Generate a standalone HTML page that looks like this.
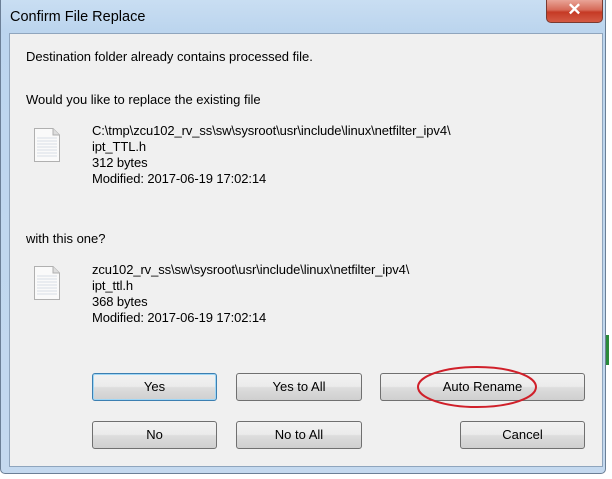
<!DOCTYPE html>
<html><head><style>
body{margin:0;width:612px;height:479px;overflow:hidden;background:#fff;font-family:"Liberation Sans",sans-serif;position:relative}
.frame{position:absolute;left:0;top:0;width:606px;height:474px;background:linear-gradient(180deg,#c9def2 0,#bcd5ee 30px,#c4d9ef 100%);border:1px solid #6b7f96;border-top:none;box-sizing:border-box;border-radius:0 0 5px 5px}
.title{position:absolute;left:10px;top:9px;font-size:14.5px;color:#000}
.close{position:absolute;left:546px;top:0;width:57px;height:23px;border:1px solid #7a3a30;border-top:none;border-radius:0 0 5px 5px;background:linear-gradient(180deg,#e9a497 0,#d66a58 45%,#c53a25 55%,#d45a44 100%);box-sizing:border-box;color:#fff;font-size:17px;font-weight:bold;text-align:center;line-height:20px}
.panel{position:absolute;left:9px;top:33px;width:594px;height:434px;background:#f0f0f0;border:1px solid #8fa5bd;box-sizing:border-box}
.t{position:absolute;font-size:13px;color:#000;white-space:nowrap}
.btn{position:absolute;height:28px;box-sizing:border-box;border:1px solid #707070;border-radius:3px;background:linear-gradient(180deg,#f2f2f2 0,#ebebeb 48%,#dddddd 52%,#cfcfcf 100%);font-size:13px;text-align:center;line-height:26px}
.def{border-color:#3c7fb1;box-shadow:inset 0 0 0 1px #9fd6f5}
.icon{position:absolute;width:26px;height:34px}
</style></head><body>
<div class="frame"></div>
<div class="title">Confirm File Replace</div>
<div class="close">✕</div>
<div class="panel"></div>
<div class="t" style="left:26px;top:49px">Destination folder already contains processed file.</div>
<div class="t" style="left:26px;top:92px">Would you like to replace the existing file</div>
<svg class="icon" style="left:34px;top:128px" viewBox="0 0 26 34"><path d="M0.5 0.5H19L25.5 7V33.5H0.5Z" fill="#fafafa" stroke="#b0b0b0"/><path d="M19 0.5V7H25.5" fill="#ddd" stroke="#b0b0b0"/><g stroke="#d8dde6"><path d="M3 10H23M3 13H23M3 16H23M3 19H23M3 22H23M3 25H23M3 28H23"/></g></svg>
<div class="t" style="left:92px;top:123px;line-height:16px;letter-spacing:-0.1px">C:\tmp\zcu102_rv_ss\sw\sysroot\usr\include\linux\netfilter_ipv4\<br>ipt_TTL.h<br>312 bytes<br>Modified: 2017-06-19 17:02:14</div>
<div class="t" style="left:26px;top:231px">with this one?</div>
<svg class="icon" style="left:34px;top:266px" viewBox="0 0 26 34"><path d="M0.5 0.5H19L25.5 7V33.5H0.5Z" fill="#fafafa" stroke="#b0b0b0"/><path d="M19 0.5V7H25.5" fill="#ddd" stroke="#b0b0b0"/><g stroke="#d8dde6"><path d="M3 10H23M3 13H23M3 16H23M3 19H23M3 22H23M3 25H23M3 28H23"/></g></svg>
<div class="t" style="left:92px;top:262px;line-height:16px;letter-spacing:-0.1px">zcu102_rv_ss\sw\sysroot\usr\include\linux\netfilter_ipv4\<br>ipt_ttl.h<br>368 bytes<br>Modified: 2017-06-19 17:02:14</div>
<div class="btn def" style="left:92px;top:373px;width:125px">Yes</div>
<div class="btn" style="left:236px;top:373px;width:126px">Yes to All</div>
<div class="btn" style="left:380px;top:373px;width:205px">Auto Rename</div>
<div class="btn" style="left:92px;top:421px;width:125px">No</div>
<div class="btn" style="left:236px;top:421px;width:126px">No to All</div>
<div class="btn" style="left:460px;top:421px;width:125px">Cancel</div>
<svg style="position:absolute;left:414px;top:362px" width="128" height="50"><ellipse cx="63" cy="25" rx="59" ry="20" fill="none" stroke="#d0202a" stroke-width="2"/></svg>
<div style="position:absolute;left:606px;top:335px;width:3px;height:30px;background:#2a8a3a"></div>
</body></html>
